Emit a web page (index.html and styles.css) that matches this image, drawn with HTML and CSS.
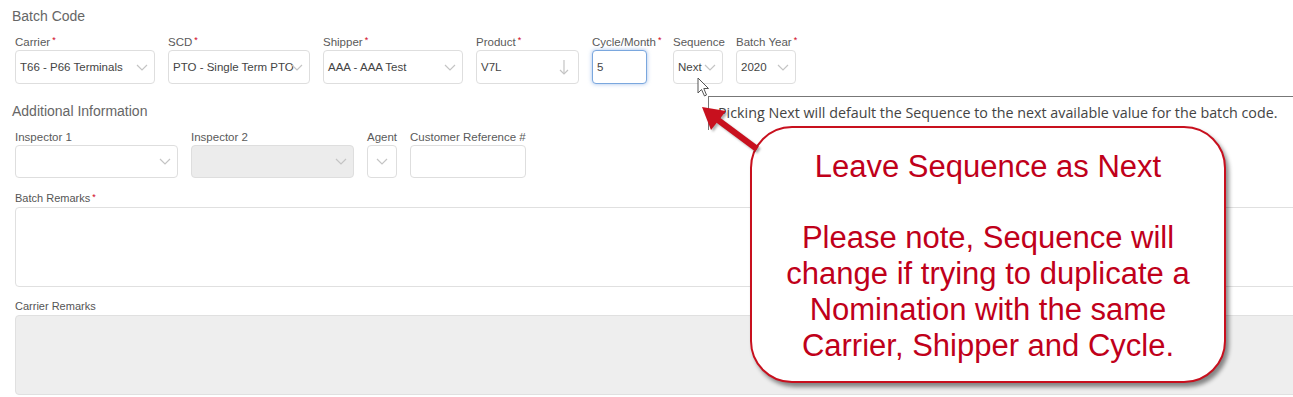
FILE: index.html
```html
<!DOCTYPE html>
<html lang="en">
<head>
    <meta charset="UTF-8">
    <meta name="viewport" content="width=device-width, initial-scale=1.0">
    <title>Nomination - Batch Code</title>
    <link rel="stylesheet" href="styles.css">
</head>
<body>

    <main class="form">
        <h2 class="section-title">Batch Code</h2>
        <div class="field-row">
            <div class="field w-carrier">
                <label>Carrier<span class="req">*</span></label>
                <div class="select"><span class="value">T66 - P66 Terminals</span><svg class="chev" width="12" height="7" viewBox="0 0 12 7"><polyline points="1,1 6,6 11,1"/></svg></div>
            </div>
            <div class="field w-scd">
                <label>SCD<span class="req">*</span></label>
                <div class="select"><span class="value">PTO - Single Term PTO</span><svg class="chev" width="12" height="7" viewBox="0 0 12 7"><polyline points="1,1 6,6 11,1"/></svg></div>
            </div>
            <div class="field w-shipper">
                <label>Shipper<span class="req">*</span></label>
                <div class="select"><span class="value">AAA - AAA Test</span><svg class="chev" width="12" height="7" viewBox="0 0 12 7"><polyline points="1,1 6,6 11,1"/></svg></div>
            </div>
            <div class="field w-product">
                <label>Product<span class="req">*</span></label>
                <div class="select"><span class="value">V7L</span><svg class="down" width="10" height="16" viewBox="0 0 10 16"><line x1="5" y1="1" x2="5" y2="15"/><polyline points="1,11 5,15 9,11"/></svg></div>
            </div>
            <div class="field w-cycle">
                <label>Cycle/Month<span class="req">*</span></label>
                <div class="input focused">5</div>
            </div>
            <div class="field w-seq">
                <label>Sequence</label>
                <div class="select"><span class="value">Next</span><svg class="chev" width="12" height="7" viewBox="0 0 12 7"><polyline points="1,1 6,6 11,1"/></svg></div>
            </div>
            <div class="field w-year">
                <label>Batch Year<span class="req">*</span></label>
                <div class="select"><span class="value">2020</span><svg class="chev" width="12" height="7" viewBox="0 0 12 7"><polyline points="1,1 6,6 11,1"/></svg></div>
            </div>
        </div>

        <h2 class="section-title additional">Additional Information</h2>
        <div class="field-row">
            <div class="field w-insp">
                <label>Inspector 1</label>
                <div class="select short"><span class="value"></span><svg class="chev" width="12" height="7" viewBox="0 0 12 7"><polyline points="1,1 6,6 11,1"/></svg></div>
            </div>
            <div class="field w-insp">
                <label>Inspector 2</label>
                <div class="select short disabled"><span class="value"></span><svg class="chev" width="12" height="7" viewBox="0 0 12 7"><polyline points="1,1 6,6 11,1"/></svg></div>
            </div>
            <div class="field w-agent">
                <label>Agent</label>
                <div class="select short agent"><svg class="chev" width="12" height="7" viewBox="0 0 12 7"><polyline points="1,1 6,6 11,1"/></svg></div>
            </div>
            <div class="field w-ref">
                <label>Customer Reference #</label>
                <div class="input short"></div>
            </div>
        </div>

        <div class="remarks-block">
            <label class="small-label">Batch Remarks<span class="req">*</span></label>
            <div class="remarks"></div>
        </div>
        <div class="remarks-block carrier">
            <label class="small-label">Carrier Remarks</label>
            <div class="remarks disabled"></div>
        </div>
    </main>

    <!-- hover tooltip for the Sequence field -->
    <div class="tooltip">Picking Next will default the Sequence to the next available value for the batch code.</div>

    <!-- annotation callout -->
    <div class="callout">
        Leave Sequence as Next<br><br>
        Please note, Sequence will<br>
        change if trying to duplicate a<br>
        Nomination with the same<br>
        Carrier, Shipper and Cycle.
    </div>

    <svg class="arrow" width="80" height="70" viewBox="0 0 80 70">
        <line x1="57" y1="46" x2="18" y2="17" />
        <polygon points="2,4 26,8 11,27" />
    </svg>

    <svg class="cursor" width="14" height="21" viewBox="0 0 14 21">
        <path d="M1,1 L1,16 L4.5,12.5 L7.5,19 L9.5,18 L6.8,11.5 L11.5,11.5 Z"/>
    </svg>

</body>
</html>
```

FILE: styles.css
```css
* {
    box-sizing: border-box;
}

body {
    margin: 0;
    width: 1293px;
    height: 397px;
    overflow: hidden;
    position: relative;
    background-color: #fff;
    font-family: "Liberation Sans", Arial, sans-serif;
    color: #555;
}

.form {
    padding: 6px 0 0 15px;
}

.section-title {
    margin: 0 0 0 -3px;
    font-size: 14px;
    font-weight: normal;
    line-height: 20px;
    color: #666;
}

.section-title.additional {
    margin-top: 17px;
}

.field-row {
    display: flex;
    gap: 13px;
    margin-top: 8px;
}

.field label {
    display: block;
    font-size: 11.5px;
    line-height: 16px;
    margin-bottom: 0;
    white-space: nowrap;
    color: #5a5a5a;
}

.req {
    color: #d0021b;
    font-size: 9px;
    vertical-align: top;
    margin-left: 2px;
    line-height: 12px;
}

.w-carrier { width: 140px; }
.w-scd { width: 142px; }
.w-shipper { width: 140px; }
.w-product { width: 103px; }
.w-cycle { width: 68px; }
.w-seq { width: 50px; }
.w-year { width: 60px; }
.w-insp { width: 163px; }
.w-agent { width: 30px; }
.w-ref { width: 116px; }

.select,
.input {
    height: 34px;
    display: flex;
    align-items: center;
    padding: 0 6px 0 4px;
    border: 1px solid #dedede;
    border-radius: 4px;
    background-color: #fff;
    font-size: 11.5px;
    color: #444;
}

.select.short,
.input.short {
    height: 33px;
}

.select .value {
    flex: 1;
    min-width: 0;
    white-space: nowrap;
}

.select.disabled {
    background-color: #ececec;
}

.select.agent {
    justify-content: center;
    padding: 0;
}

.input.focused {
    width: 55px;
    border-color: #7aa7de;
    box-shadow: 0 0 4px rgba(102, 150, 220, 0.6);
}

.chev {
    flex-shrink: 0;
    fill: none;
    stroke: #c4c4c4;
    stroke-width: 1.2;
}

.down {
    flex-shrink: 0;
    margin-right: 3px;
    fill: none;
    stroke: #c4c4c4;
    stroke-width: 1.2;
}

.remarks-block {
    margin-top: 13px;
}

.remarks-block.carrier {
    margin-top: 12px;
}

.small-label {
    display: block;
    font-size: 11px;
    line-height: 14px;
    color: #555;
    margin-bottom: 2px;
}

.remarks {
    width: 1300px;
    height: 80px;
    border: 1px solid #e0e0e0;
    border-radius: 4px;
    background-color: #fff;
}

.remarks.disabled {
    background-color: #eeeeee;
}

.tooltip {
    position: absolute;
    left: 708px;
    top: 96px;
    width: 600px;
    height: 34px;
    padding: 6px 0 0 9px;
    border-top: 1px solid #777;
    border-left: 1px solid #777;
    background-color: #fff;
    font-family: "Open Sans", sans-serif;
    font-size: 14.3px;
    color: #444;
    white-space: nowrap;
}

.callout {
    position: absolute;
    left: 750px;
    top: 126px;
    width: 476px;
    height: 257px;
    padding-top: 21px;
    border: 2px solid #c8101e;
    border-radius: 42px;
    background-color: #fff;
    box-shadow: 3px 4px 4px rgba(0, 0, 0, 0.45);
    font-family: "Liberation Sans", Arial, sans-serif;
    font-size: 31px;
    line-height: 35.7px;
    text-align: center;
    color: #c0001a;
}

.arrow {
    position: absolute;
    left: 700px;
    top: 103px;
    filter: drop-shadow(2px 2px 1px rgba(0, 0, 0, 0.3));
}

.arrow line {
    stroke: #c8101e;
    stroke-width: 6;
}

.arrow polygon {
    fill: #c8101e;
}

.cursor {
    position: absolute;
    left: 697px;
    top: 77px;
}

.cursor path {
    fill: #fff;
    stroke: #555;
    stroke-width: 1;
}
```
